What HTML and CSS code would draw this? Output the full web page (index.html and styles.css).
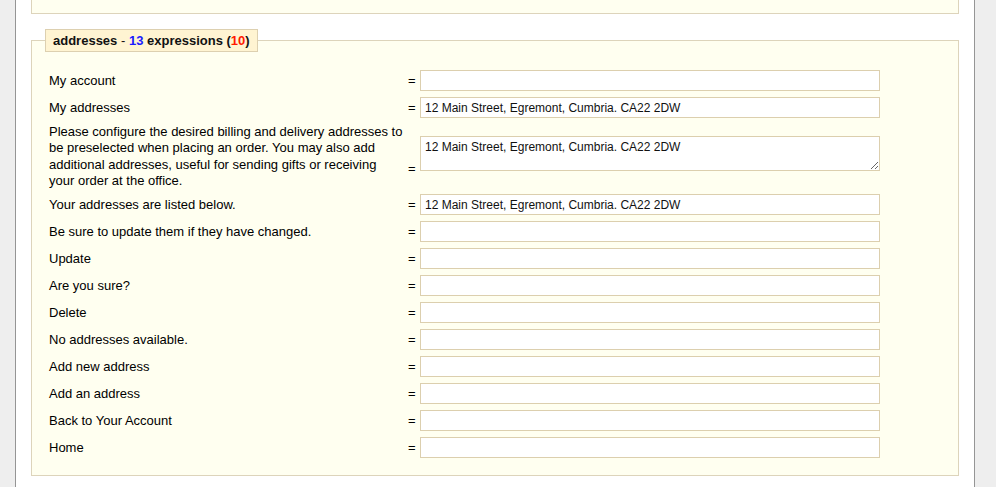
FILE: index.html
```html
<!DOCTYPE html>
<html>
<head>
<meta charset="utf-8">
<link rel="stylesheet" href="styles.css">
</head>
<body>
<div class="page">
  <div class="prev-box"></div>
  <fieldset class="group">
    <legend class="group-title">addresses <span class="dash">-</span> <span class="count">13</span> expressions (<span class="missing">10</span>)</legend>
    <div class="rows">
      <div class="label">My account</div>
      <div class="value"><span class="eq">=</span><input class="field" type="text" value=""></div>

      <div class="label">My addresses</div>
      <div class="value"><span class="eq">=</span><input class="field" type="text" value="12 Main Street, Egremont, Cumbria. CA22 2DW"></div>

      <div class="label label-long">Please configure the desired billing and delivery addresses to be preselected when placing an order. You may also add additional addresses, useful for sending gifts or receiving your order at the office.</div>
      <div class="value value-area"><span class="eq eq-area">=</span><textarea class="area">12 Main Street, Egremont, Cumbria. CA22 2DW</textarea></div>

      <div class="label">Your addresses are listed below.</div>
      <div class="value"><span class="eq">=</span><input class="field" type="text" value="12 Main Street, Egremont, Cumbria. CA22 2DW"></div>

      <div class="label">Be sure to update them if they have changed.</div>
      <div class="value"><span class="eq">=</span><input class="field" type="text" value=""></div>

      <div class="label">Update</div>
      <div class="value"><span class="eq">=</span><input class="field" type="text" value=""></div>

      <div class="label">Are you sure?</div>
      <div class="value"><span class="eq">=</span><input class="field" type="text" value=""></div>

      <div class="label">Delete</div>
      <div class="value"><span class="eq">=</span><input class="field" type="text" value=""></div>

      <div class="label">No addresses available.</div>
      <div class="value"><span class="eq">=</span><input class="field" type="text" value=""></div>

      <div class="label">Add new address</div>
      <div class="value"><span class="eq">=</span><input class="field" type="text" value=""></div>

      <div class="label">Add an address</div>
      <div class="value"><span class="eq">=</span><input class="field" type="text" value=""></div>

      <div class="label">Back to Your Account</div>
      <div class="value"><span class="eq">=</span><input class="field" type="text" value=""></div>

      <div class="label">Home</div>
      <div class="value"><span class="eq">=</span><input class="field" type="text" value=""></div>
    </div>
  </fieldset>
</div>
</body>
</html>
```

FILE: styles.css
```css
html, body {
  margin: 0;
  padding: 0;
}
body {
  background: #eeeeee;
  font-family: "Liberation Sans", Arial, sans-serif;
  font-size: 13px;
  color: #000;
}
.page {
  margin-left: 15px;
  width: 928px;
  min-height: 487px;
  padding: 0 15px;
  background: #ffffff;
  border-left: 1px solid #959595;
  border-right: 1px solid #959595;
}
.prev-box {
  height: 13px;
  background: #fffff0;
  border: 1px solid #ddd4bb;
  border-top: none;
}
.group {
  margin: 15px 0 0 0;
  padding: 17px 13px 16px 13px;
  background: #fffff0;
  border: 1px solid #ddd4bb;
  min-width: 0;
}
.group-title {
  padding: 1px 7px 0 7px;
  line-height: 20px;
  font-weight: bold;
  font-size: 13px;
  background: #fff4d2;
  border: 1px solid #ddd0b0;
  color: #111;
}
.group-title .dash {
  font-weight: normal;
}
.count {
  color: #1a1aff;
}
.missing {
  color: #ff1a00;
}
.rows {
  margin-left: 4px;
  display: grid;
  grid-template-columns: 359px 1fr;
  row-gap: 4px;
  align-items: center;
}
.label {
  line-height: 16.5px;
  padding-top: 2px;
  padding-right: 4px;
}
.label-long {
  padding-top: 1px;
  line-height: 16.25px;
}
.value {
  display: flex;
  align-items: center;
  gap: 4px;
}
.eq {
  width: 8px;
  line-height: 15px;
}
.field {
  box-sizing: border-box;
  width: 460px;
  height: 21px;
  margin: 1px 0;
  padding: 0 4px;
  border: 1px solid #dccfae;
  background: #fff;
  font-family: "Liberation Sans", Arial, sans-serif;
  font-size: 12px;
  color: #111;
  outline: none;
}
.value-area {
  align-self: start;
  align-items: flex-end;
  padding-top: 13px;
}
.eq-area {
  margin-bottom: -5px;
}
.area {
  box-sizing: border-box;
  width: 460px;
  height: 35px;
  margin: 0;
  padding: 3px 4px;
  border: 1px solid #dccfae;
  background: #fff;
  font-family: "Liberation Sans", Arial, sans-serif;
  font-size: 12px;
  line-height: 15px;
  color: #111;
  overflow: hidden;
  outline: none;
}
```
